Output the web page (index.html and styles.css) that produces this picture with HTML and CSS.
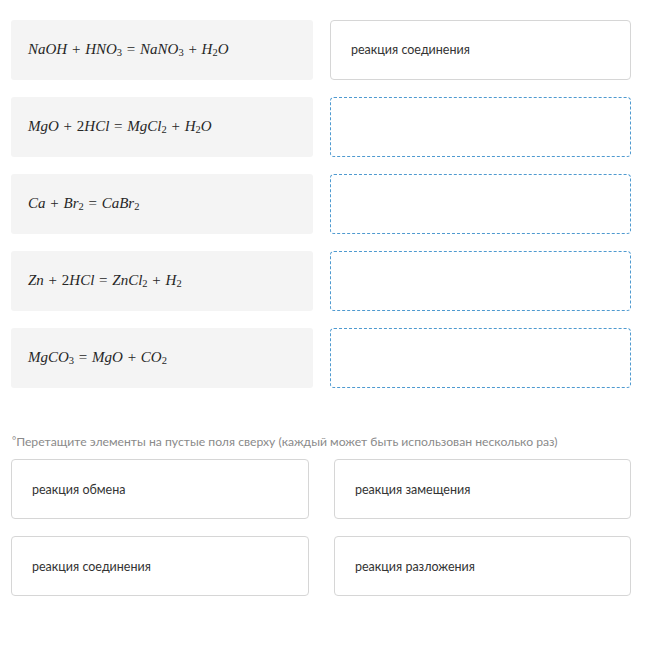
FILE: index.html
```html
<!DOCTYPE html>
<html lang="ru">
<head>
    <meta charset="UTF-8">
    <title>Типы реакций</title>
    <link rel="stylesheet" href="styles.css">
</head>
<body>
<div class="task">
    <div class="pairs">
        <div class="formula"><span class="f"><i>NaOH</i> + <i>HNO</i><sub>3</sub> = <i>NaNO</i><sub>3</sub> + <i>H</i><sub>2</sub><i>O</i></span></div>
        <div class="slot filled">реакция соединения</div>

        <div class="formula"><span class="f"><i>MgO</i> + 2<i>HCl</i> = <i>MgCl</i><sub>2</sub> + <i>H</i><sub>2</sub><i>O</i></span></div>
        <div class="slot"></div>

        <div class="formula"><span class="f"><i>Ca</i> + <i>Br</i><sub>2</sub> = <i>CaBr</i><sub>2</sub></span></div>
        <div class="slot"></div>

        <div class="formula"><span class="f"><i>Zn</i> + 2<i>HCl</i> = <i>ZnCl</i><sub>2</sub> + <i>H</i><sub>2</sub></span></div>
        <div class="slot"></div>

        <div class="formula"><span class="f"><i>MgCO</i><sub>3</sub> = <i>MgO</i> + <i>CO</i><sub>2</sub></span></div>
        <div class="slot"></div>
    </div>

    <p class="hint"><span class="mark">°</span>Перетащите элементы на пустые поля сверху (каждый может быть использован несколько раз)</p>

    <div class="options">
        <div class="option">реакция обмена</div>
        <div class="option">реакция замещения</div>
        <div class="option">реакция соединения</div>
        <div class="option">реакция разложения</div>
    </div>
</div>
</body>
</html>
```

FILE: styles.css
```css
* {
    margin: 0;
    padding: 0;
    box-sizing: border-box;
}

body {
    background: #ffffff;
    font-family: Lato, "Open Sans", sans-serif;
    color: #333333;
}

.task {
    padding: 20px 0 0 11px;
    width: 631px;
}

.pairs {
    display: grid;
    grid-template-columns: 302px 301px;
    grid-auto-rows: 60px;
    column-gap: 17px;
    row-gap: 17px;
}

.formula {
    background: #f4f4f4;
    border-radius: 3px;
    display: flex;
    align-items: center;
    padding: 0 0 1px 17px;
}

.f {
    font-family: "Liberation Serif", "DejaVu Serif", serif;
    font-size: 15px;
    color: #262626;
    word-spacing: 1px;
}

.f i {
    font-style: italic;
}

.f sub {
    font-size: 10.5px;
    vertical-align: -2px;
    line-height: 0;
}

.slot {
    border: 1px dashed #4f9ad0;
    border-radius: 4px;
}

.slot.filled {
    border: 1px solid #d6d6d6;
    display: flex;
    align-items: center;
    padding: 0 0 1px 20px;
    font-size: 12.5px;
}

.hint {
    margin: 46px 0 10px 1px;
    font-size: 12.2px;
    color: #8a8a8a;
}

.mark {
    font-size: 10px;
    vertical-align: 2px;
}

.options {
    display: grid;
    grid-template-columns: 298px 297px;
    grid-auto-rows: 60px;
    column-gap: 25px;
    row-gap: 17px;
}

.option {
    border: 1px solid #d6d6d6;
    border-radius: 4px;
    display: flex;
    align-items: center;
    padding: 0 0 0 20px;
    font-size: 12.5px;
}
```
